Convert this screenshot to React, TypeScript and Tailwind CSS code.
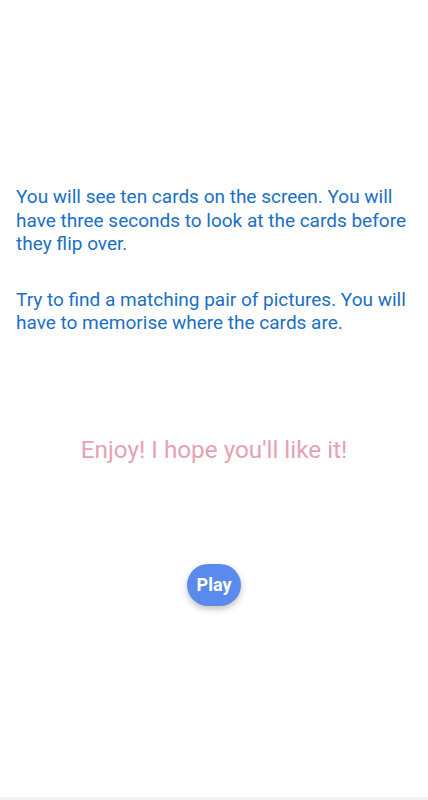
export default function App() {
  return (
    <div className="relative h-[800px] w-full bg-white font-['Roboto',sans-serif]">
      <div className="px-4 pt-[185px]">
        <p className="text-[19px] leading-[23.5px] text-[#1a6fc6]">
          You will see ten cards on the screen. You will have three seconds to look at the cards before they flip over.
        </p>
        <p className="mt-[32px] text-[19px] leading-[23.5px] text-[#1a6fc6]">
          Try to find a matching pair of pictures. You will have to memorise where the cards are.
        </p>
      </div>
      <p className="mt-[100px] text-center text-[24.3px] leading-[30px] text-[#e6a2b2]">
        Enjoy! I hope you'll like it!
      </p>
      <div className="mt-[99px] flex justify-center">
        <button className="h-[42px] w-[54px] rounded-full bg-[#5a8aee] text-[18px] font-bold text-white shadow-[0_3px_6px_rgba(0,0,0,0.25)]">
          Play
        </button>
      </div>
      <div className="absolute bottom-0 left-0 h-[3px] w-full bg-[#f3f3f3]" />
    </div>
  );
}
